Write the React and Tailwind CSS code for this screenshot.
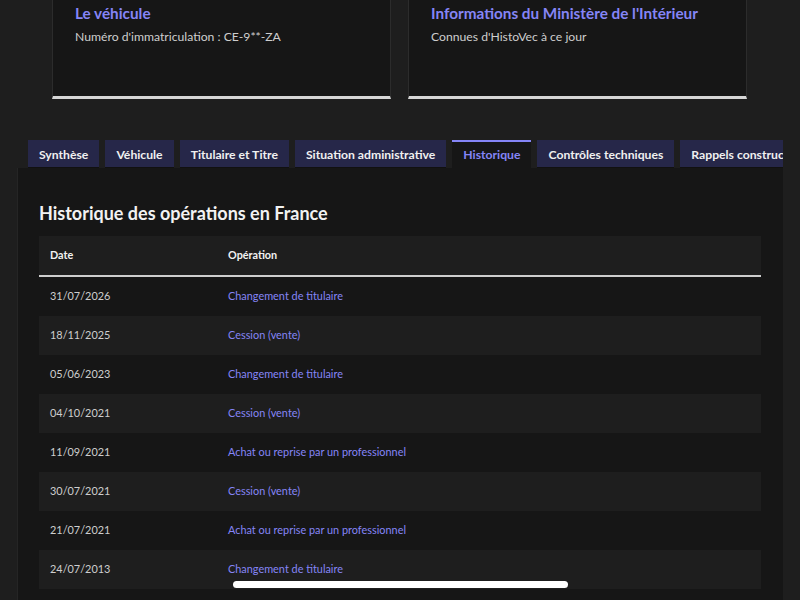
import React from "react";

const rows = [
  ["31/07/2026", "Changement de titulaire"],
  ["18/11/2025", "Cession (vente)"],
  ["05/06/2023", "Changement de titulaire"],
  ["04/10/2021", "Cession (vente)"],
  ["11/09/2021", "Achat ou reprise par un professionnel"],
  ["30/07/2021", "Cession (vente)"],
  ["21/07/2021", "Achat ou reprise par un professionnel"],
  ["24/07/2013", "Changement de titulaire"],
];

const tabs = [
  "Synthèse",
  "Véhicule",
  "Titulaire et Titre",
  "Situation administrative",
  "Historique",
  "Contrôles techniques",
  "Rappels constructeur",
];

export default function App() {
  return (
    <div
      className="relative w-[800px] h-[600px] overflow-hidden bg-[#1e1e1e] text-[#cecece]"
      style={{ fontFamily: "Lato, 'Noto Sans', sans-serif" }}
    >
      {/* Cards */}
      <div className="flex gap-[17px] px-[52px]">
        <div className="w-[339px] h-[99px] bg-[#161616] border-x border-[#2c2c2c] border-b-[3px] border-b-[#d6d6d6] px-[22px] pt-[2px]">
          <div className="text-[15.3px] font-bold leading-[22px] text-[#8585f6]">Le véhicule</div>
          <div className="mt-[4px] text-[12.2px] leading-[18px] text-[#cecece]">
            Numéro d'immatriculation : CE-9**-ZA
          </div>
        </div>
        <div className="w-[339px] h-[99px] bg-[#161616] border-x border-[#2c2c2c] border-b-[3px] border-b-[#d6d6d6] px-[22px] pt-[2px]">
          <div className="text-[15.3px] font-bold leading-[22px] text-[#8585f6]">
            Informations du Ministère de l'Intérieur
          </div>
          <div className="mt-[4px] text-[12.2px] leading-[18px] text-[#cecece]">
            Connues d'HistoVec à ce jour
          </div>
        </div>
      </div>

      {/* Tabs + panel */}
      <div className="mt-[41px] ml-[17px] w-[766px]">
        <div className="flex gap-[6px] pl-[11px] overflow-hidden whitespace-nowrap">
          {tabs.map((t) =>
            t === "Historique" ? (
              <div
                key={t}
                className="shrink-0 h-[28px] px-[11px] pt-[1px] flex items-center bg-[#161616] border-t-2 border-[#8585f6] text-[12.2px] font-bold text-[#8585f6]"
              >
                {t}
              </div>
            ) : (
              <div
                key={t}
                className="shrink-0 h-[28px] px-[11px] pt-[3px] flex items-center bg-[#262749] border-b border-[#111] text-[12.2px] font-bold text-[#f0f0f0]"
              >
                {t}
              </div>
            )
          )}
        </div>
        <div className="bg-[#161616] border-l border-[#252525] h-[500px] pt-[33px] px-[21px]">
          <h2 className="text-[18px] font-bold leading-[24px] text-[#f2f2f2]">
            Historique des opérations en France
          </h2>
          <div className="mt-[11px] w-[722px]">
            <div className="flex h-[41px] items-center bg-[#1e1e1e] border-b-2 border-[#cecece] text-[10.8px] font-bold text-[#f2f2f2]">
              <div className="w-[178px] pl-[11px]">Date</div>
              <div className="pl-[11px]">Opération</div>
            </div>
            {rows.map(([d, op], i) => (
              <div
                key={i}
                className={`flex h-[39px] items-center text-[10.9px] ${
                  i % 2 === 1 ? "bg-[#1e1e1e]" : "bg-[#161616]"
                }`}
              >
                <div className="w-[178px] pl-[11px] text-[#cecece]">{d}</div>
                <div className="pl-[11px] text-[#8585f6]">{op}</div>
              </div>
            ))}
          </div>
        </div>
      </div>

      {/* Home indicator */}
      <div className="absolute left-[233px] top-[581px] w-[335px] h-[7px] rounded-full bg-white" />
    </div>
  );
}
